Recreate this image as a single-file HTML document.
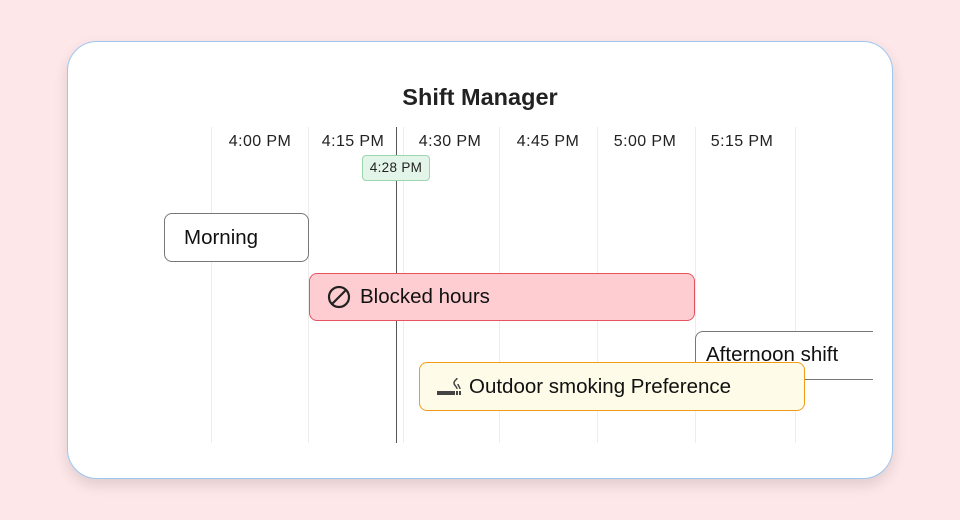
<!DOCTYPE html>
<html><head><style>
*{margin:0;padding:0;box-sizing:border-box}
body{width:960px;height:520px;background:#fde7e9;font-family:"Liberation Sans",sans-serif;position:relative;overflow:hidden}
.card{position:absolute;left:67px;top:41px;width:826px;height:438px;background:#fff;border:1px solid #9cc8f0;border-radius:30px;box-shadow:0 6px 14px rgba(0,0,0,.12)}
.abs{position:absolute}
.vl{position:absolute;top:127px;height:316px;width:1px;background:#ececec}
.lbl{position:absolute;top:133px;font-size:16px;color:#222;width:98px;text-align:center;letter-spacing:0.4px}
.box{position:absolute;display:flex;align-items:center;font-size:20.5px;color:#111;border-radius:8px}
</style></head><body>
<div class="card"></div>
<div class="abs" style="left:0;width:960px;top:84px;text-align:center;font-size:23.5px;font-weight:bold;color:#222">Shift Manager</div>
<div class="vl" style="left:211px"></div><div class="vl" style="left:308px"></div><div class="vl" style="left:403px"></div><div class="vl" style="left:499px"></div><div class="vl" style="left:597px"></div><div class="vl" style="left:695px"></div><div class="vl" style="left:795px"></div>
<div class="lbl" style="left:211px">4:00 PM</div><div class="lbl" style="left:304px">4:15 PM</div><div class="lbl" style="left:401px">4:30 PM</div><div class="lbl" style="left:499px">4:45 PM</div><div class="lbl" style="left:596px">5:00 PM</div><div class="lbl" style="left:693px">5:15 PM</div>
<div class="abs" style="left:396px;top:127px;width:1px;height:316px;background:#555"></div>
<div class="abs" style="left:362px;top:155px;width:68px;height:26px;background:#e3f5e8;border:1px solid #9dd5ae;border-radius:4px;font-size:13.5px;color:#222;text-align:center;line-height:24px;letter-spacing:0.3px">4:28 PM</div>
<div class="box" style="left:164px;top:213px;width:145px;height:49px;background:#fff;border:1px solid #777;padding-left:19px">Morning</div>
<div class="box" style="left:309px;top:273px;width:386px;height:48px;background:#fecdd2;border:1px solid #e5535f;padding-left:17px"><svg width="24" height="24" viewBox="0 0 24 24" style="margin-right:9px"><circle cx="12" cy="12" r="10" fill="none" stroke="#222" stroke-width="2.2"/><line x1="5" y1="19" x2="19" y2="5" stroke="#222" stroke-width="2.2"/></svg>Blocked hours</div>
<div class="box" style="left:695px;top:331px;width:178px;height:49px;background:#fff;border:1px solid #777;border-right:none;border-radius:8px 0 0 8px;padding-left:10px;align-items:flex-start;padding-top:11px">Afternoon shift</div>
<div class="box" style="left:419px;top:362px;width:386px;height:49px;background:#fefbe8;border:1px solid #f29a1a;padding-left:16px"><svg width="26" height="22" viewBox="0 0 26 22" style="margin-right:7px"><rect x="1" y="15" width="18" height="4" fill="#444"/><rect x="20" y="15" width="2" height="4" fill="#444"/><rect x="23" y="15" width="2" height="4" fill="#444"/><path d="M21 13c0-3-3-3-3-6s3-3 3-5M24 13c0-2-2-3-2-5" fill="none" stroke="#444" stroke-width="1.5"/></svg>Outdoor smoking Preference</div>
</body></html>
